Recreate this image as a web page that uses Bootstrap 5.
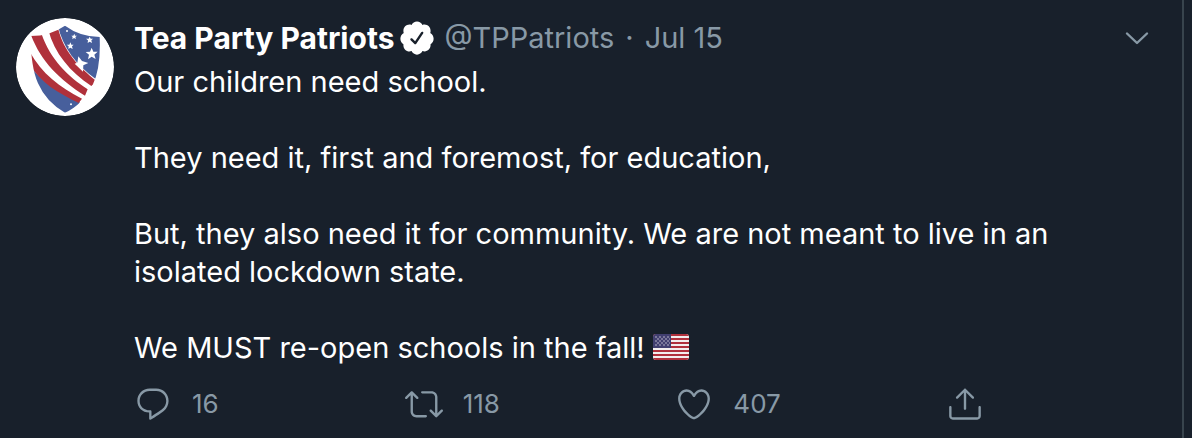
<!DOCTYPE html>
<html lang="en">
<head>
<meta charset="utf-8">
<meta name="viewport" content="width=device-width, initial-scale=1">
<title>Tea Party Patriots</title>
<link href="https://cdn.jsdelivr.net/npm/bootstrap@5.3.0/dist/css/bootstrap.min.css" rel="stylesheet">
<style>
  body { background: #18202b; color: #fff; font-family: Inter, "Liberation Sans", sans-serif; font-size: 29px; line-height: 38px; }
  .timeline { border-right: 2px solid #38444d; margin-right: 8px; padding: 18px 32px 0 16px; }
  .avatar { width: 98px; height: 98px; }
  .tweet { gap: 20px; }
  .tweet-body { padding-top: 1px; }
  .muted, .muted:hover { color: #8899a6; }
  .display-name { font-weight: 700; font-size: 30px; }
  .verified { width: 38px; height: 38px; }
  .separator { margin: 0 11px; }
  .tweet-text { white-space: pre-line; margin-top: 6px; }
  .flag { width: 36px; height: 26px; vertical-align: -2px; }
  .actions { max-width: 850px; margin-top: 18px; }
  .action { gap: 20px; font-size: 26px; line-height: 38px; }
  .icon { width: 38px; height: 38px; fill: currentColor; }
</style>
</head>
<body>
<main class="timeline min-vh-100">
  <article class="tweet d-flex align-items-start">
    <svg class="avatar flex-shrink-0 rounded-circle" viewBox="48 54 294 294" role="img" aria-label="Tea Party Patriots logo">
      <defs><clipPath id="shield"><path d="M92 108Q150 108 195 77Q240 110 299 111Q303 205 278 255Q246 316 195 338Q139 307 114 250Q92 200 92 108Z"/></clipPath></defs>
      <circle cx="195" cy="201" r="147" fill="#fff"/>
      <g clip-path="url(#shield)">
        <path d="M172 70C187 140 225 193 290 239L320 220V70Z" fill="#475f9c"/>
        <path d="M85 190C120 240 170 275 240 305L220 350H80Z" fill="#475f9c"/>
        <path d="M145 90C163 160 210 215 274 258L290 244C235 198 192 157 174 84Z" fill="#b0313b"/>
        <path d="M93 105C123 185 180 240 255 287L263 268C205 230 151 180 124 100Z" fill="#b0313b"/>
        <path d="M88 153C123 218 177 261 246 296L236 309C174 279 118 247 88 190Z" fill="#b0313b"/>
      </g>
      <g fill="#fff">
        <path d="M275 143l5 12 13 0-10 9 4 13-12-7-11 8 3-14-10-8 13-1z"/>
        <path d="M269 110l3 6 7 0-5 5 2 8-7-4-6 4 1-8-6-5 8 0z"/>
        <path d="M223 101l2 6 6 0-5 4 2 6-6-3-5 4 1-7-4-4 6 0z"/>
        <path d="M211 127l3 7 7 0-5 5 2 8-7-4-6 4 1-8-6-5 8 0z"/>
        <path d="M235 169l11 14 19 6-15 7-1 19-25-24 8-3z"/>
        <circle cx="201" cy="93" r="3"/><circle cx="213" cy="313" r="3"/>
      </g>
    </svg>
    <div class="tweet-body flex-grow-1">
      <header class="d-flex align-items-center">
        <span class="display-name">Tea Party Patriots</span>
        <svg class="verified ms-1" viewBox="0 0 24 24" fill="#fff" role="img" aria-label="Verified account"><path d="M22.5 12.5c0-1.58-.875-2.95-2.148-3.6.154-.435.238-.905.238-1.4 0-2.21-1.71-3.998-3.818-3.998-.47 0-.92.084-1.336.25C14.818 2.415 13.51 1.5 12 1.5s-2.816.917-3.437 2.25c-.415-.165-.866-.25-1.336-.25-2.11 0-3.818 1.79-3.818 4 0 .494.083.964.237 1.4-1.272.65-2.147 2.018-2.147 3.6 0 1.495.782 2.798 1.942 3.486-.02.17-.032.34-.032.514 0 2.21 1.708 4 3.818 4 .47 0 .92-.086 1.335-.25.62 1.334 1.926 2.25 3.437 2.25 1.512 0 2.818-.916 3.437-2.25.415.163.865.248 1.336.248 2.11 0 3.818-1.79 3.818-4 0-.174-.012-.344-.033-.513 1.158-.687 1.943-1.99 1.943-3.484zm-6.616-3.334l-4.334 6.5c-.145.217-.382.334-.625.334-.143 0-.288-.04-.416-.126l-.115-.094-2.415-2.415c-.293-.293-.293-.768 0-1.06s.768-.294 1.06 0l1.77 1.767 3.825-5.74c.23-.345.696-.436 1.04-.207.346.23.44.696.21 1.04z"/></svg>
        <span class="muted ms-2">@TPPatriots</span><span class="separator muted">·</span><a href="#" class="muted text-decoration-none">Jul 15</a>
        <button type="button" class="btn p-0 border-0 muted ms-auto d-flex" aria-label="More">
          <svg width="26" height="26" viewBox="0 0 26 26" fill="none" stroke="currentColor" stroke-width="2.4" stroke-linecap="round" stroke-linejoin="round"><path d="M3 8.500l10 9.500 10-9.500"/></svg>
        </button>
      </header>
      <div class="tweet-text">Our children need school.

They need it, first and foremost, for education,

But, they also need it for community. We are not meant to live in an isolated lockdown state.

We MUST re-open schools in the fall! <svg class="flag" viewBox="0 0 36 26" role="img" aria-label="United States flag"><defs><clipPath id="flag-edge"><rect width="36" height="26" rx="3"/></clipPath></defs><g clip-path="url(#flag-edge)"><rect width="36" height="26" fill="#f3eeee"/><path d="M0 1h36M0 5h36M0 9h36M0 13h36M0 17h36M0 21h36M0 25h36" stroke="#b0303c" stroke-width="2"/><rect width="18" height="14" fill="#413f70"/><path d="M2 3h15M4 5h13M2 7h15M4 9h13M2 11h15" stroke="#8d8ba8" stroke-width="1.500" stroke-dasharray="2 2"/></g></svg></div>
      <div class="actions d-flex">
        <div class="col"><button type="button" class="action btn p-0 border-0 muted d-flex align-items-center" aria-label="16 replies"><svg class="icon" viewBox="0 0 24 24"><path d="M14.046 2.242l-4.148-.01h-.002c-4.374 0-7.8 3.427-7.8 7.802 0 4.098 3.186 7.206 7.465 7.37v3.828c0 .108.044.286.12.403.142.225.384.347.632.347.138 0 .277-.038.402-.118.264-.168 6.473-4.14 8.088-5.506 1.902-1.61 3.04-3.97 3.043-6.312v-.017c-.006-4.367-3.43-7.787-7.8-7.788zm3.787 12.972c-1.134.96-4.862 3.405-6.772 4.643V16.67c0-.414-.335-.75-.75-.75h-.396c-3.66 0-6.318-2.476-6.318-5.886 0-3.534 2.768-6.302 6.3-6.302l4.147.01h.002c3.532 0 6.3 2.766 6.302 6.296-.003 1.91-.942 3.844-2.514 5.176z"/></svg>16</button></div>
        <div class="col"><button type="button" class="action btn p-0 border-0 muted d-flex align-items-center" aria-label="118 retweets"><svg class="icon" viewBox="0 0 24 24"><path d="M23.77 15.67c-.292-.293-.767-.293-1.06 0l-2.22 2.22V7.65c0-2.068-1.683-3.75-3.75-3.75h-5.85c-.414 0-.75.336-.75.75s.336.75.75.75h5.85c1.24 0 2.25 1.01 2.25 2.25v10.24l-2.22-2.22c-.293-.293-.768-.293-1.06 0s-.294.768 0 1.06l3.5 3.5c.145.147.337.22.53.22s.383-.072.53-.22l3.5-3.5c.294-.292.294-.767 0-1.06zm-10.66 3.28H7.26c-1.24 0-2.25-1.01-2.25-2.25V6.46l2.22 2.22c.148.147.34.22.532.22s.384-.073.53-.22c.293-.293.293-.768 0-1.06l-3.5-3.5c-.293-.294-.768-.294-1.06 0l-3.5 3.5c-.294.292-.294.767 0 1.06s.767.293 1.06 0l2.22-2.22V16.7c0 2.068 1.683 3.75 3.75 3.75h5.85c.414 0 .75-.336.75-.75s-.337-.75-.75-.75z"/></svg>118</button></div>
        <div class="col"><button type="button" class="action btn p-0 border-0 muted d-flex align-items-center" aria-label="407 likes"><svg class="icon" viewBox="0 0 24 24"><path d="M12 21.638h-.014C9.403 21.590 1.950 14.856 1.950 8.478c0-3.064 2.525-5.754 5.403-5.754 2.290 0 3.830 1.580 4.646 2.730.814-1.148 2.354-2.730 4.645-2.730 2.880 0 5.404 2.690 5.404 5.755 0 6.376-7.454 13.110-10.037 13.157H12zM7.354 4.225c-2.080 0-3.903 1.988-3.903 4.255 0 5.740 7.034 11.596 8.550 11.658 1.518-.062 8.550-5.917 8.550-11.658 0-2.267-1.823-4.255-3.903-4.255-2.528 0-3.940 2.936-3.952 2.965-.230.562-1.156.562-1.387 0-.014-.030-1.425-2.965-3.954-2.965z"/></svg>407</button></div>
        <button type="button" class="btn p-0 border-0 muted d-flex" aria-label="Share"><svg class="icon" viewBox="0 0 24 24"><path d="M17.530 7.470l-5-5c-.293-.293-.768-.293-1.060 0l-5 5c-.294.293-.294.768 0 1.060s.767.294 1.060 0l3.720-3.720V15c0 .414.336.750.750.750s.750-.336.750-.750V4.810l3.720 3.720c.146.147.338.220.530.220s.384-.072.530-.220c.293-.293.293-.767 0-1.060z"/><path d="M19.708 21.944H4.292C3.028 21.944 2 20.916 2 19.652V14c0-.414.336-.750.750-.750s.750.336.750.750v5.652c0 .437.355.792.792.792h15.416c.437 0 .792-.355.792-.792V14c0-.414.336-.750.750-.750s.750.336.750.750v5.652c0 1.264-1.028 2.292-2.292 2.292z"/></svg></button>
      </div>
    </div>
  </article>
</main>
<script src="https://cdn.jsdelivr.net/npm/bootstrap@5.3.0/dist/js/bootstrap.bundle.min.js"></script>
</body>
</html>
